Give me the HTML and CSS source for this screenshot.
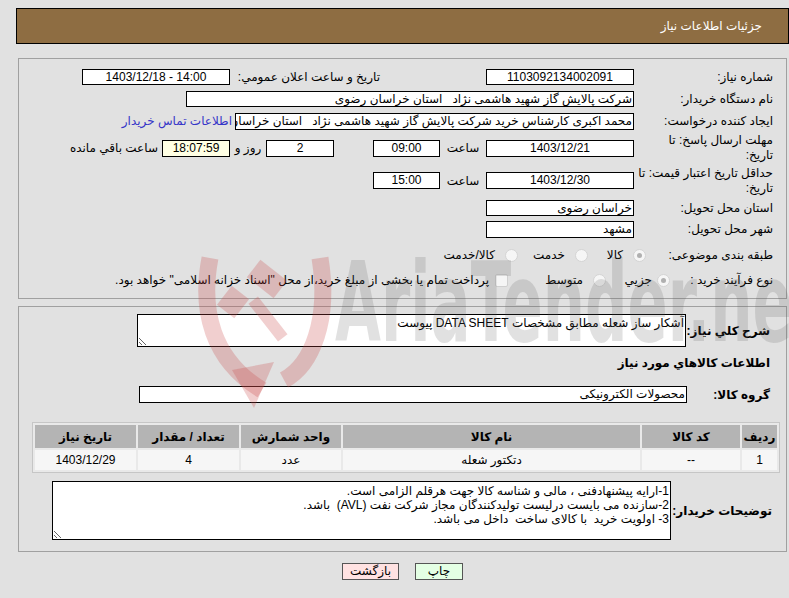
FILE: index.html
```html
<!DOCTYPE html>
<html lang="fa" dir="rtl">
<head>
<meta charset="utf-8">
<title>جزئیات اطلاعات نیاز</title>
<link rel="stylesheet" href="styles.css">
</head>
<body>
<div class="page">
  <div class="header">جزئیات اطلاعات نیاز</div>

  <div class="panel p1">
    <div class="row h22">
      <div class="lbl">شماره نیاز:</div>
      <div class="box w148 ctr">1103092134002091</div>
      <div class="lbl-pub">تاریخ و ساعت اعلان عمومي:</div>
      <div class="box w148 ctr" dir="ltr">1403/12/18 - 14:00</div>
    </div>
    <div class="row h22">
      <div class="lbl">نام دستگاه خریدار:</div>
      <div class="box w448">شرکت پالایش گاز شهید هاشمی نژاد &nbsp; استان خراسان رضوی</div>
    </div>
    <div class="row h22">
      <div class="lbl">ایجاد کننده درخواست:</div>
      <div class="box w399 h17">محمد اکبری کارشناس خرید شرکت پالایش گاز شهید هاشمی نژاد &nbsp; استان خراسان رضوی</div>
      <span class="link">اطلاعات تماس خریدار</span>
    </div>
    <div class="row h32">
      <div class="lbl two">مهلت ارسال پاسخ: تا<br>تاریخ:</div>
      <div class="box w148 ctr h17">1403/12/21</div>
      <span class="sa">ساعت</span>
      <div class="box w67 ctr h17">09:00</div>
      <div class="box w68 ctr h17 ml39">2</div>
      <span class="rooz">روز و</span>
      <div class="box w68 ctr h17 remain">18:07:59</div>
      <span class="rest">ساعت باقي مانده</span>
    </div>
    <div class="row h33">
      <div class="lbl two">حداقل تاریخ اعتبار قیمت: تا<br>تاریخ:</div>
      <div class="box w148 ctr h17">1403/12/30</div>
      <span class="sa">ساعت</span>
      <div class="box w67 ctr h17">15:00</div>
    </div>
    <div class="row h21">
      <div class="lbl">استان محل تحویل:</div>
      <div class="box w148">خراسان رضوی</div>
    </div>
    <div class="row h22">
      <div class="lbl">شهر محل تحویل:</div>
      <div class="box w148 h17">مشهد</div>
    </div>
    <div class="row h30">
      <div class="lbl w127">طبقه بندی موضوعی:</div>
      <div class="opt o58"><span class="radio on"></span><span class="otext">کالا</span></div>
      <div class="opt o70"><span class="radio"></span><span class="otext">خدمت</span></div>
      <div class="opt"><span class="radio"></span><span class="otext">کالا/خدمت</span></div>
    </div>
    <div class="row h20">
      <div class="lbl w103">نوع فرآیند خرید :</div>
      <div class="opt o64"><span class="radio on"></span><span class="otext m5">جزیي</span></div>
      <div class="opt o98"><span class="radio"></span><span class="otext">متوسط</span></div>
      <div class="opt"><span class="check"></span><span class="otext m6">پرداخت تمام یا بخشی از مبلغ خرید،از محل "اسناد خزانه اسلامی" خواهد بود.</span></div>
    </div>
  </div>

  <div class="panel p2">
    <div class="row">
      <div class="blbl w84">شرح کلي نیاز:</div>
      <textarea class="ta ta1">آشکار ساز شعله مطابق مشخصات DATA SHEET پیوست</textarea>
    </div>
    <div class="section">اطلاعات کالاهاي مورد نیاز</div>
    <div class="row grp">
      <div class="blbl w83">گروه کالا:</div>
      <div class="box w548 h17">محصولات الکترونیکی</div>
    </div>
    <div class="tablewrap">
      <table class="items">
        <colgroup>
          <col class="c1"><col class="c2"><col class="c3"><col class="c4"><col class="c5"><col class="c6">
        </colgroup>
        <thead>
          <tr>
            <th>ردیف</th>
            <th>کد کالا</th>
            <th>نام کالا</th>
            <th>واحد شمارش</th>
            <th>تعداد / مقدار</th>
            <th>تاریخ نیاز</th>
          </tr>
        </thead>
        <tbody>
          <tr>
            <td>1</td>
            <td>--</td>
            <td>دتکتور شعله</td>
            <td>عدد</td>
            <td>4</td>
            <td>1403/12/29</td>
          </tr>
        </tbody>
      </table>
    </div>
    <div class="row desc">
      <div class="blbl w101">توضیحات خریدار:</div>
      <textarea class="ta ta2">1-ارایه پیشنهادفنی ، مالی و شناسه کالا جهت هرقلم الزامی است.
2-سازنده می بایست درلیست تولیدکنندگان مجاز شرکت نفت (AVL)  باشد.
3- اولویت خرید  با کالای ساخت  داخل می باشد.</textarea>
    </div>
  </div>

  <div class="buttons">
    <span class="btn print">چاپ</span>
    <span class="btn back">بازگشت</span>
  </div>
</div>

<div class="wm-logo">
  <svg width="150" height="165" viewBox="0 0 150 165">
    <path d="M18 8 C8 60 20 110 70 140" fill="none" stroke="rgba(200,70,70,0.26)" stroke-width="17"/>
    <path d="M128 8 C138 70 120 115 92 130" fill="none" stroke="rgba(200,70,70,0.26)" stroke-width="17"/>
    <path d="M40 120 L82 112 L62 158 Z" fill="rgba(200,70,70,0.26)"/>
    <rect x="58" y="18" width="34" height="22" transform="rotate(38 75 29)" fill="rgba(200,70,70,0.26)"/>
    <rect x="30" y="40" width="22" height="24" transform="rotate(38 41 52)" fill="rgba(200,70,70,0.26)"/>
    <rect x="70" y="45" width="12" height="48" transform="rotate(-38 76 69)" fill="rgba(200,70,70,0.26)"/>
  </svg>
</div>
<div class="wm-text">AriaTender.net</div>
</body>
</html>
```

FILE: styles.css
```css
* { box-sizing: border-box; }
html, body { margin: 0; padding: 0; }
body {
  background: #e1e1e1;
  font-family: "Liberation Sans", "DejaVu Sans", sans-serif;
  font-size: 12px;
  color: #000;
  width: 789px;
  height: 598px;
  overflow: hidden;
  position: relative;
}
.page { padding: 8px 0 0 16px; }

.header {
  height: 36px;
  background: #8e6d42;
  border: 1px solid #000;
  color: #fff;
  padding-right: 26px;
  line-height: 34px;
  font-size: 12px;
}

.panel { border: 1px solid #a0a0a0; margin: 14px 2px 0 2px; }
.p1 { padding: 7px 13px 8px 0; }
.p2 { margin-top: 7px; padding: 7px 16px 11px 0; }

.row { display: flex; align-items: center; }
.h20 { height: 20px; }
.h21 { height: 21px; }
.h22 { height: 22px; }
.h30 { height: 30px; }
.h32 { height: 32px; }
.h33 { height: 33px; }

.lbl { width: 139px; flex: none; text-align: right; white-space: nowrap; }
.lbl.two { line-height: 15px; }
.lbl.w127 { width: 127px; }
.lbl.w103 { width: 103px; }
.lbl-pub { width: 150px; margin-right: 106px; flex: none; white-space: nowrap; }

.box {
  flex: none;
  height: 16px;
  border: 1px solid #000;
  background: #fff;
  line-height: 14px;
  padding: 0 1px;
  white-space: nowrap;
  overflow: hidden;
  text-align: right;
}
.box.h17 { height: 17px; line-height: 15px; }
.box.ctr { text-align: center; }
.w148 { width: 148px; }
.w448 { width: 448px; }
.w399 { width: 399px; }
.w67 { width: 67px; }
.w68 { width: 68px; }
.w548 { width: 548px; }
.ml39 { margin-right: 39px; }
.remain { background: #ffffe4; }

.link { color: #3535c8; margin-right: 3px; white-space: nowrap; }
.sa { width: 46px; text-align: center; flex: none; }
.rooz { width: 36px; text-align: center; flex: none; }
.rest { margin-right: 4px; white-space: nowrap; }

.opt { display: flex; align-items: center; flex: none; white-space: nowrap; }
.o58 { width: 58px; }
.o70 { width: 70px; }
.o64 { width: 64px; }
.o98 { width: 98px; }
.radio {
  width: 13px; height: 13px; border-radius: 50%;
  border: 1px solid #d4d4d4; background: #f6f6f6;
  flex: none; position: relative;
}
.radio.on::after {
  content: ""; position: absolute; left: 3px; top: 3px;
  width: 5px; height: 5px; border-radius: 50%; background: #b0b0b0;
}
.check {
  width: 13px; height: 13px; border: 1px solid #cfcfcf; background: #f5f5f5;
  border-radius: 2px; flex: none;
}
.otext { margin-right: 10px; }
.otext.m5 { margin-right: 5px; }
.otext.m6 { margin-right: 6px; }

.blbl { flex: none; font-weight: bold; white-space: nowrap; text-align: right; }
.w84 { width: 84px; }
.w83 { width: 83px; }
.w101 { width: 101px; margin-right: -2px; }

.ta {
  flex: none;
  border: 1px solid #000;
  background: #fff;
  font-family: "Liberation Sans", "DejaVu Sans", sans-serif;
  font-size: 12px;
  padding: 1px 1px;
  margin: 0;
  direction: rtl;
  line-height: 15px;
  overflow: hidden;
}
.ta1 { width: 549px; height: 33px; }
.ta2 { width: 619px; height: 59px; line-height: 14px; padding-top: 2px; }

.section { height: 32px; line-height: 32px; font-weight: bold; }
.grp { margin-top: 7px; }

.tablewrap { margin: 19px -10px 0 0; display: flex; justify-content: flex-start; }
.items {
  flex: none;
  width: 748px;
  border-collapse: separate;
  border-spacing: 2px;
  border: 1px solid #c6c6c6;
  background: #e9e9e9;
  table-layout: fixed;
}
.items th {
  background: #b4b4b4;
  height: 23px;
  font-weight: bold;
  padding: 0;
  text-align: center;
}
.items td {
  background: #f6f6f6;
  height: 20px;
  padding: 0;
  text-align: center;
}
.c1 { width: 35px; }
.c2 { width: 98px; }
.c3 { width: 297px; }
.c4 { width: 100px; }
.c5 { width: 101px; }
.c6 { width: 101px; }

.desc { margin-top: 8px; }

.buttons { display: flex; justify-content: center; gap: 16px; margin-top: 11px; }
.btn {
  height: 17px;
  border: 1px solid #555;
  line-height: 15px;
  text-align: center;
}
.print { width: 48px; background: #e4ffe4; }
.back { width: 57px; background: #ffe2e2; }

.wm-logo { position: absolute; left: 192px; top: 250px; pointer-events: none; }
.wm-text {
  position: absolute;
  left: 335px;
  top: 238px;
  font-family: "DejaVu Sans Condensed", "DejaVu Sans", sans-serif;
  font-weight: bold;
  font-size: 110px;
  line-height: 130px;
  color: rgba(90, 90, 90, 0.18);
  white-space: nowrap;
  transform: scaleX(0.6);
  transform-origin: left top;
  direction: ltr;
  pointer-events: none;
}
```
